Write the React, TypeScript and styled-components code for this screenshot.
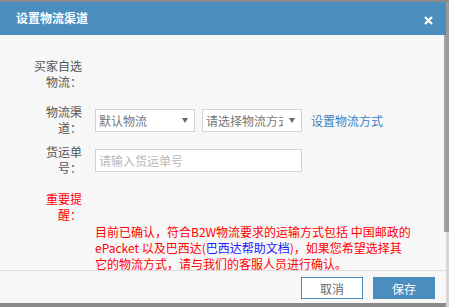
import React from "react";
import styled, { createGlobalStyle } from "styled-components";

const GlobalStyle = createGlobalStyle`
  html, body { margin: 0; padding: 0; }
  body {
    width: 449px;
    height: 307px;
    overflow: hidden;
    background: #8a8a8a;
    font-family: "Noto Sans CJK SC", "Microsoft YaHei", sans-serif;
    font-size: 12px;
  }
`;

const Page = styled.div`
  width: 449px;
  height: 307px;
  display: flex;
  padding-top: 2px;
  box-sizing: border-box;
`;

const Dialog = styled.div`
  width: 446px;
  height: 301px;
  display: flex;
  flex-direction: column;
  background: #f7f7f7;
`;

const PageScroll = styled.div`
  width: 3px;
  display: flex;
  flex-direction: column;
`;

const PageScrollPart = styled.div<{ $h: number; $c: string }>`
  height: ${(p) => p.$h}px;
  background: ${(p) => p.$c};
  flex: ${(p) => (p.$h === 0 ? 1 : "none")};
`;

const Header = styled.div`
  height: 33px;
  background: #4b8ebd;
  display: flex;
  align-items: center;
  justify-content: space-between;
  padding: 0 13px 0 16px;
  color: #fff;
`;

const Title = styled.div`
  font-size: 12px;
  font-weight: bold;
  line-height: 16px;
  margin-top: -1px;
`;

const Close = styled.div`
  width: 9px;
  height: 9px;
  display: flex;
  margin-top: 3px;
`;

const BodyWrap = styled.div`
  flex: 1;
  display: flex;
  overflow: hidden;
`;

const Content = styled.div`
  flex: 1;
  padding: 23px 0 0 33px;
  overflow: hidden;
`;

const Track = styled.div`
  width: 2px;
  display: flex;
  flex-direction: column;
`;

const Thumb = styled.div`
  height: 197px;
  background: #a3a3a3;
`;

const Row = styled.div<{ $mt: number }>`
  display: flex;
  align-items: center;
  margin-top: ${(p) => p.$mt}px;
`;

const Label = styled.div<{ $red?: boolean }>`
  width: 49px;
  text-align: right;
  line-height: 16px;
  color: ${(p) => (p.$red ? "#f00" : "#555")};
  margin-right: 13px;
  flex: none;
`;

const Field = styled.div`
  display: flex;
  align-items: center;
  gap: 7px;
`;

const SelectBox = styled.div<{ $w: number }>`
  width: ${(p) => p.$w}px;
  height: 23px;
  box-sizing: border-box;
  border: 1px solid #d2d2d2;
  background: #fff;
  display: flex;
  align-items: center;
  padding: 0 6px 0 3px;
  color: #777;
  font-size: 12px;
`;

const SelectText = styled.span`
  flex: 1;
  white-space: nowrap;
  overflow: hidden;
`;

const Arrow = styled.svg`
  width: 6px;
  height: 5px;
  margin-left: 6px;
  flex: none;
`;

const Link = styled.a`
  color: #3a80c0;
  text-decoration: none;
  margin-left: 2px;
`;

const TextInput = styled.input`
  width: 207px;
  height: 23px;
  box-sizing: border-box;
  border: 1px solid #d2d2d2;
  background: #fff;
  padding: 0 3px;
  font-family: inherit;
  font-size: 12px;
  outline: none;
  &::placeholder {
    color: #b8b8b8;
  }
`;

const Notice = styled.div`
  margin: 1px 0 0 62px;
  color: #f00;
  line-height: 16px;
  white-space: nowrap;
`;

const BlueLink = styled.a`
  color: #1a1aff;
  text-decoration: none;
`;

const Footer = styled.div`
  height: 33px;
  box-sizing: border-box;
  border-top: 1px solid #dcdcdc;
  display: flex;
  justify-content: flex-end;
  align-items: flex-start;
  gap: 10px;
  padding: 6px 11px 0 0;
`;

const Button = styled.button<{ $primary?: boolean }>`
  width: 62px;
  height: 22px;
  box-sizing: border-box;
  border: 1px solid #4b8ebd;
  background: ${(p) => (p.$primary ? "#4b8ebd" : "#fff")};
  color: ${(p) => (p.$primary ? "#fff" : "#666")};
  font-family: inherit;
  font-size: 12px;
  padding: 0;
  cursor: pointer;
`;

const DownArrow = () => (
  <Arrow viewBox="0 0 6 5">
    <path d="M0 0H6L3 5Z" fill="#666" />
  </Arrow>
);

export default function App() {
  return (
    <>
      <GlobalStyle />
      <Page>
        <Dialog>
          <Header>
            <Title>设置物流渠道</Title>
            <Close>
              <svg width="9" height="9" viewBox="0 0 9 9">
                <path d="M1 1L8 8M8 1L1 8" stroke="#fff" strokeWidth="2.2" />
              </svg>
            </Close>
          </Header>
          <BodyWrap>
            <Content>
              <Row $mt={0}>
                <Label>买家自选物流：</Label>
              </Row>
              <Row $mt={14}>
                <Label>物流渠道：</Label>
                <Field>
                  <SelectBox $w={100}>
                    <SelectText>默认物流</SelectText>
                    <DownArrow />
                  </SelectBox>
                  <SelectBox $w={100}>
                    <SelectText>请选择物流方式</SelectText>
                    <DownArrow />
                  </SelectBox>
                  <Link href="#">设置物流方式</Link>
                </Field>
              </Row>
              <Row $mt={8}>
                <Label>货运单号：</Label>
                <Field>
                  <TextInput placeholder="请输入货运单号" />
                </Field>
              </Row>
              <Row $mt={15}>
                <Label $red>重要提醒：</Label>
              </Row>
              <Notice>
                目前已确认，符合B2W物流要求的运输方式包括 中国邮政的
                <br />
                ePacket 以及巴西达(<BlueLink href="#">巴西达帮助文档</BlueLink>)，如果您希望选择其
                <br />
                它的物流方式，请与我们的客服人员进行确认。
              </Notice>
            </Content>
            <Track>
              <Thumb />
            </Track>
          </BodyWrap>
          <Footer>
            <Button>取消</Button>
            <Button $primary>保存</Button>
          </Footer>
        </Dialog>
        <PageScroll>
          <PageScrollPart $h={230} $c="#9a9a9a" />
          <PageScrollPart $h={0} $c="#d6d6d6" />
        </PageScroll>
      </Page>
    </>
  );
}
